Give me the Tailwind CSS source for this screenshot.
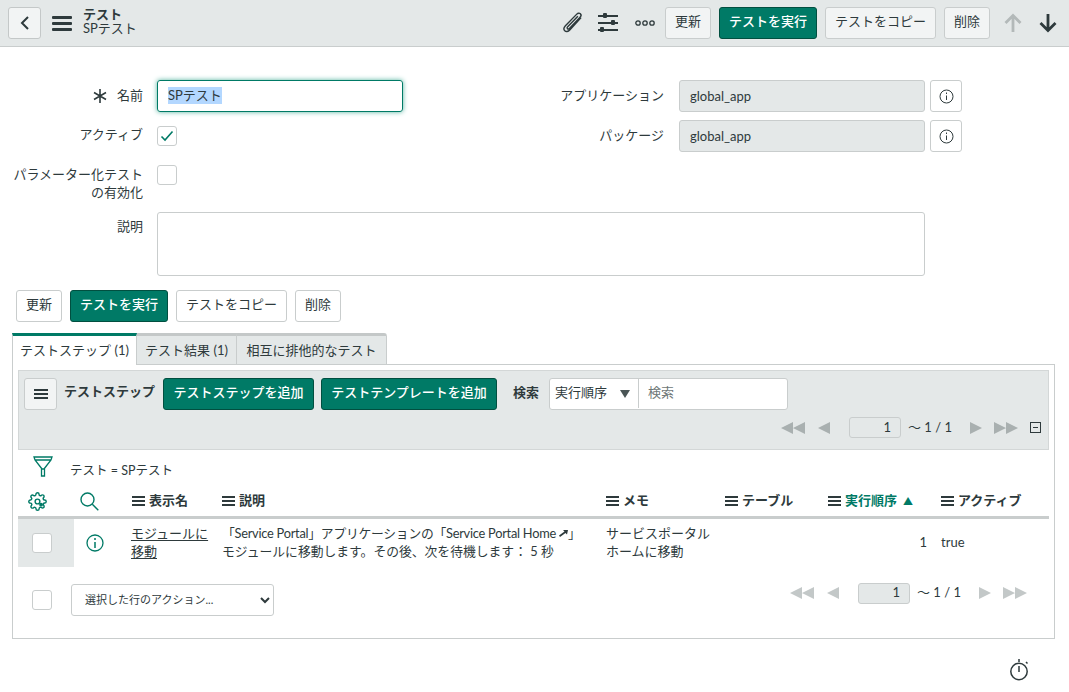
<!DOCTYPE html>
<html lang="ja">
<head>
  <meta charset="UTF-8" />
  <title>テスト</title>
  <script src="https://cdn.jsdelivr.net/npm/@tailwindcss/browser@4"></script>
</head>
<body class="bg-white text-[#2e3a3c] text-[13px] font-['Lato','Noto_Sans_CJK_JP',sans-serif] h-[692px] w-[1069px] overflow-hidden">

  <!-- header -->
  <header class="h-[47px] bg-[#e4e8e8] border-b border-[#c9cdcd] flex items-center pl-2 pr-[11px]">
    <button class="w-[33px] h-[32px] bg-[#f2f4f4] border border-[#c4c8c8] rounded-[3px] flex items-center justify-center">
      <svg width="10" height="16" viewBox="0 0 10 16" fill="none" stroke="#2e3a3c" stroke-width="2"><path d="M8 2 2 8l6 6"/></svg>
    </button>
    <svg class="ml-[11px]" width="20" height="16" viewBox="0 0 20 16" fill="#2e3a3c"><rect width="20" height="3" y="1" rx="1"/><rect width="20" height="3" y="7" rx="1"/><rect width="20" height="3" y="13" rx="1"/></svg>
    <div class="ml-[11px] leading-[14px] pb-[5px]">
      <div class="font-bold text-[13px]">テスト</div>
      <div class="text-[13px]">SPテスト</div>
    </div>
    <div class="ml-auto flex items-center">
      <svg width="26" height="26" viewBox="0 0 24 24" fill="none" stroke="#2e3a3c" stroke-width="1.3"><path d="M19.5 7 9 18.5c-1.500 1.600-3.500 1.800-4.600.7-1.100-1.100-.9-3 .6-4.600L15.500 3.800c1-1 2.400-1.200 3.300-.3.900.9.700 2.300-.3 3.300L8.700 17c-.6.600-1.300.7-1.800.2-.5-.5-.4-1.200.2-1.800L16.500 5.800"/></svg>
      <svg class="ml-[12px]" width="22" height="22" viewBox="0 0 22 22" fill="#2e3a3c"><rect y="3" width="20" height="2"/><rect x="5" y="1" width="4" height="5" rx="1"/><rect y="10" width="20" height="2"/><rect x="13" y="8" width="4" height="5" rx="1"/><rect y="17" width="20" height="2"/><rect x="2" y="15" width="4" height="5" rx="1"/></svg>
      <svg class="ml-[15px]" width="20" height="6" viewBox="0 0 20 6" fill="none" stroke="#2e3a3c" stroke-width="1.3"><circle cx="3" cy="3" r="2.200"/><circle cx="10" cy="3" r="2.200"/><circle cx="17" cy="3" r="2.200"/></svg>
      <button class="ml-[10px] h-[32px] w-[46px] pb-[2px] bg-[#f2f4f4] border border-[#c9cdcd] rounded-[3px]">更新</button>
      <button class="ml-2 h-[32px] w-[98px] pb-[2px] bg-[#007a66] border border-[#014f40] rounded-[3px] text-white font-medium">テストを実行</button>
      <button class="ml-2 h-[32px] w-[111px] pb-[2px] bg-[#f2f4f4] border border-[#c9cdcd] rounded-[3px]">テストをコピー</button>
      <button class="ml-2 h-[32px] w-[46px] pb-[2px] bg-[#f2f4f4] border border-[#c9cdcd] rounded-[3px]">削除</button>
      <svg class="ml-[13px]" width="20" height="20" viewBox="0 0 20 20" fill="none" stroke="#b3b9b9" stroke-width="2.800"><path d="M10 19V3M2.500 10 10 2.500l7.500 7.500"/></svg>
      <svg class="ml-[15px]" width="20" height="20" viewBox="0 0 20 20" fill="none" stroke="#2e3a3c" stroke-width="2.800"><path d="M10 1v16M2.500 10l7.500 7.500 7.500-7.500"/></svg>
    </div>
  </header>

  <!-- form -->
  <form class="pt-[33px] pl-[13px]">
    <div class="grid grid-cols-[130px_260px_262px_260px_auto] items-start">
      <div class="col-start-1 h-[32px] flex items-center justify-end gap-[10px]">
        <svg width="14" height="14" viewBox="0 0 14 14" stroke="#2e3a3c" stroke-width="1.600" fill="none"><path d="M7 0v14M1 3.500l12 7M13 3.500l-12 7"/></svg>
        <span>名前</span>
      </div>
      <div class="ml-[14px] h-[32px] border border-[#007a66] rounded-[3px] shadow-[0_0_5px_#53b39f] flex items-center px-[10px]">
        <span class="bg-[#b3d7ff] leading-[17px] -translate-y-px">SPテスト</span>
      </div>
      <div class="h-[32px] flex items-center justify-end pr-[1px]">アプリケーション</div>
      <div class="ml-[14px] h-[32px] bg-[#e4e8e8] border border-[#c9cdcd] rounded-[3px] flex items-center px-[10px]"><span class="translate-y-px">global_app</span></div>
      <div class="ml-[5px] w-[32px] h-[32px] border border-[#c9cdcd] rounded-[3px] flex items-center justify-center">
        <svg width="15" height="15" viewBox="0 0 15 15" fill="none" stroke="#2e3a3c"><circle cx="7.500" cy="7.500" r="6.500"/><path d="M7.500 6.500v4.500M7.500 3.500v1.500"/></svg>
      </div>

      <div class="col-start-1 mt-2 h-[32px] flex items-center justify-end -translate-y-px">アクティブ</div>
      <div class="ml-[14px] mt-2 h-[32px] flex items-center">
        <div class="w-[20px] h-[20px] border border-[#c9cdcd] rounded-[3px] flex items-center justify-center">
          <svg width="14" height="12" viewBox="0 0 14 12" fill="none" stroke="#007a66" stroke-width="1.600"><path d="M1.500 6.500 5 10l7.500-8.500"/></svg>
        </div>
      </div>
      <div class="mt-2 h-[32px] flex items-center justify-end pr-[1px]">パッケージ</div>
      <div class="ml-[14px] mt-2 h-[32px] bg-[#e4e8e8] border border-[#c9cdcd] rounded-[3px] flex items-center px-[10px]"><span class="translate-y-px">global_app</span></div>
      <div class="ml-[5px] mt-2 w-[32px] h-[32px] border border-[#c9cdcd] rounded-[3px] flex items-center justify-center">
        <svg width="15" height="15" viewBox="0 0 15 15" fill="none" stroke="#2e3a3c"><circle cx="7.500" cy="7.500" r="6.500"/><path d="M7.500 6.500v4.500M7.500 3.500v1.500"/></svg>
      </div>

      <div class="col-start-1 mt-[13px] text-right leading-[18px]">パラメーター化テスト<br>の有効化</div>
      <div class="ml-[14px] mt-[13px] w-[20px] h-[20px] border border-[#c9cdcd] rounded-[3px]"></div>
    </div>

    <div class="flex items-start mt-[11px]">
      <div class="w-[130px] text-right pt-[5px]">説明</div>
      <div class="ml-[14px] w-[768px] h-[64px] border border-[#c9cdcd] rounded-[3px]"></div>
    </div>

    <div class="flex gap-2 mt-[14px] ml-[3px]">
      <button class="h-[32px] w-[46px] pb-[2px] border border-[#c9cdcd] rounded-[3px]">更新</button>
      <button class="h-[32px] w-[98px] pb-[2px] bg-[#007a66] border border-[#014f40] rounded-[3px] text-white font-medium">テストを実行</button>
      <button class="h-[32px] w-[111px] pb-[2px] border border-[#c9cdcd] rounded-[3px]">テストをコピー</button>
      <button class="h-[32px] w-[46px] pb-[2px] border border-[#c9cdcd] rounded-[3px]">削除</button>
    </div>
  </form>

  <!-- tabs -->
  <div class="ml-[12px] mt-[11px] flex h-[32px] w-[375px] relative z-10">
    <div class="w-[125px] pt-[1px] bg-white border-l border-r border-[#c9cdcd] border-t-[3px] border-t-[#007a66] flex items-center justify-center h-[32px]">テストステップ (1)</div>
    <div class="w-[100px] pt-[1px] bg-[#e4e8e8] border-r border-[#c9cdcd] border-t-[3px] border-t-[#c4c8c8] border-b flex items-center justify-center h-[32px]">テスト結果 (1)</div>
    <div class="w-[150px] pt-[1px] bg-[#e4e8e8] border-r border-[#c9cdcd] border-t-[3px] border-t-[#c4c8c8] border-b rounded-tr-[3px] flex items-center justify-center h-[32px]">相互に排他的なテスト</div>
  </div>

  <section class="ml-[12px] -mt-px w-[1043px] h-[275px] border border-[#c9cdcd] px-[5px] pt-[5px]">
    <!-- list toolbar -->
    <div class="h-[80px] bg-[#e4e8e8] border border-[#d3d7d7] pl-[5px] pr-[7px] pt-[7px]">
      <div class="flex items-center h-[32px]">
        <button class="w-[33px] h-[32px] bg-[#f2f4f4] border border-[#c9cdcd] rounded-[3px] flex items-center justify-center">
          <svg width="14" height="12" viewBox="0 0 14 12" fill="#2e3a3c"><rect width="14" height="2" y="1"/><rect width="14" height="2" y="5"/><rect width="14" height="2" y="9"/></svg>
        </button>
        <span class="ml-[7px] font-bold -translate-y-[2px]">テストステップ</span>
        <button class="ml-[8px] w-[151px] h-[32px] pb-[2px] bg-[#007a66] border border-[#014f40] rounded-[3px] text-white font-medium">テストステップを追加</button>
        <button class="ml-[7px] w-[176px] h-[32px] pb-[2px] bg-[#007a66] border border-[#014f40] rounded-[3px] text-white font-medium">テストテンプレートを追加</button>
        <span class="ml-[16px] font-bold -translate-y-px">検索</span>
        <div class="ml-[10px] flex h-[32px] w-[239px] bg-white border border-[#c9cdcd] rounded-[3px]">
          <div class="w-[89px] border-r border-[#c9cdcd] flex items-center justify-between pl-[5px] pr-[8px] -translate-y-px">実行順序<svg width="10" height="9" viewBox="0 0 10 9" fill="#4a5556"><path d="M0 1h10L5 9z"/></svg></div>
          <div class="pl-[9px] flex items-center text-[#6e7777] -translate-y-px">検索</div>
        </div>
      </div>
      <div class="flex items-center justify-end -mt-[1px] h-[37px]">
        <svg width="25" height="12" viewBox="0 0 25 12" fill="#a9b0b0"><path d="M12 0v12L0 6zM24 0v12L12 6z"/></svg>
        <svg class="ml-[12px]" width="12" height="12" viewBox="0 0 12 12" fill="#a9b0b0"><path d="M12 0v12L0 6z"/></svg>
        <div class="ml-[19px] w-[52px] h-[21px] border border-[#c9cdcd] rounded-[3px] flex items-center justify-end pr-[9px]">1</div>
        <span class="ml-[7px] w-[44px]">～ 1 / 1</span>
        <svg class="ml-[18px]" width="12" height="12" viewBox="0 0 12 12" fill="#a9b0b0"><path d="M0 0v12l12-6z"/></svg>
        <svg class="ml-[12px]" width="25" height="12" viewBox="0 0 25 12" fill="#a9b0b0"><path d="M0 0v12l12-6zM12 0v12l12-6z"/></svg>
        <div class="ml-[11px] w-[11px] h-[11px] border border-[#2e3a3c] flex items-center justify-center"><div class="w-[5px] h-px bg-[#2e3a3c]"></div></div>
      </div>
    </div>

    <!-- filter breadcrumb -->
    <div class="flex items-center h-[30px] mt-[5px]">
      <svg class="ml-[15px] -translate-y-[3px]" width="20" height="22" viewBox="0 0 20 22" fill="none" stroke="#007a66" stroke-width="1.300"><path d="M1 1h18l-1 3-7 9H9L2 4zM2 4h16M8.500 13v7h3v-7"/></svg>
      <span class="ml-[17px] text-[12.500px] translate-y-px">テスト = SPテスト</span>
    </div>

    <!-- table header -->
    <div class="grid grid-cols-[56px_57px_91px_384px_119px_103px_113px_108px] h-[33px] items-center border-b-[3px] border-[#c9cdcd] font-bold mt-[1px] w-[1031px]">
      <div class="pl-[10px]">
        <svg width="19" height="19" viewBox="0 0 24 24" fill="none" stroke="#007a66" stroke-width="1.800"><circle cx="12" cy="12" r="3"/><circle cx="16.500" cy="16" r="1.500" fill="#007a66"/><path d="M19.400 15a1.650 1.650 0 0 0 .33 1.820l.06.06a2 2 0 0 1 0 2.830 2 2 0 0 1-2.830 0l-.06-.06a1.650 1.650 0 0 0-1.820-.33 1.650 1.650 0 0 0-1 1.510V21a2 2 0 0 1-2 2 2 2 0 0 1-2-2v-.09A1.650 1.650 0 0 0 9 19.400a1.650 1.650 0 0 0-1.820.33l-.06.06a2 2 0 0 1-2.830 0 2 2 0 0 1 0-2.830l.06-.06a1.650 1.650 0 0 0 .33-1.820 1.650 1.650 0 0 0-1.510-1H3a2 2 0 0 1-2-2 2 2 0 0 1 2-2h.09A1.650 1.650 0 0 0 4.600 9a1.650 1.650 0 0 0-.33-1.820l-.06-.06a2 2 0 0 1 0-2.830 2 2 0 0 1 2.830 0l.06.06a1.650 1.650 0 0 0 1.820.33H9a1.650 1.650 0 0 0 1-1.510V3a2 2 0 0 1 2-2 2 2 0 0 1 2 2v.09a1.650 1.650 0 0 0 1 1.510 1.650 1.650 0 0 0 1.820-.33l.06-.06a2 2 0 0 1 2.830 0 2 2 0 0 1 0 2.830l-.06.06a1.650 1.650 0 0 0-.33 1.820V9a1.650 1.650 0 0 0 1.510 1H21a2 2 0 0 1 2 2 2 2 0 0 1-2 2h-.09a1.650 1.650 0 0 0-1.510 1z"/></svg>
      </div>
      <div class="pl-[6px]">
        <svg width="19" height="19" viewBox="0 0 19 19" fill="none" stroke="#007a66" stroke-width="1.400"><circle cx="7.500" cy="7.500" r="6.500"/><path d="m12.300 12.300 6 6"/></svg>
      </div>
      <div class="flex items-center gap-[4px] pl-px"><svg width="13" height="10" viewBox="0 0 13 10" fill="#2e3a3c"><rect width="13" height="2"/><rect width="13" height="2" y="4"/><rect width="13" height="2" y="8"/></svg>表示名</div>
      <div class="flex items-center gap-[4px]"><svg width="13" height="10" viewBox="0 0 13 10" fill="#2e3a3c"><rect width="13" height="2"/><rect width="13" height="2" y="4"/><rect width="13" height="2" y="8"/></svg>説明</div>
      <div class="flex items-center gap-[4px]"><svg width="13" height="10" viewBox="0 0 13 10" fill="#2e3a3c"><rect width="13" height="2"/><rect width="13" height="2" y="4"/><rect width="13" height="2" y="8"/></svg>メモ</div>
      <div class="flex items-center gap-[4px]"><svg width="13" height="10" viewBox="0 0 13 10" fill="#2e3a3c"><rect width="13" height="2"/><rect width="13" height="2" y="4"/><rect width="13" height="2" y="8"/></svg>テーブル</div>
      <div class="flex items-center gap-[4px] text-[#007a66]"><svg width="13" height="10" viewBox="0 0 13 10" fill="#2e3a3c"><rect width="13" height="2"/><rect width="13" height="2" y="4"/><rect width="13" height="2" y="8"/></svg>実行順序<span class="ml-[2px] text-[10px]">▲</span></div>
      <div class="flex items-center gap-[4px]"><svg width="13" height="10" viewBox="0 0 13 10" fill="#2e3a3c"><rect width="13" height="2"/><rect width="13" height="2" y="4"/><rect width="13" height="2" y="8"/></svg>アクティブ</div>
    </div>

    <!-- table row -->
    <div class="grid grid-cols-[56px_57px_91px_384px_119px_103px_113px_108px] h-[48px] w-[1031px] items-center leading-[18px]">
      <div class="h-full bg-[#e4e8e8] flex items-center pl-[14px]"><div class="w-[20px] h-[20px] bg-white border border-[#c9cdcd] rounded-[3px]"></div></div>
      <div class="pl-[12px]">
        <svg width="18" height="18" viewBox="0 0 18 18" fill="none" stroke="#007a66" stroke-width="1.300"><circle cx="9" cy="9" r="8"/><path d="M9 8v6M9 4v2" stroke-width="1.500"/></svg>
      </div>
      <div class="underline underline-offset-2 -translate-y-px">モジュールに<br>移動</div>
      <div class="whitespace-nowrap -translate-y-px text-[12.800px]"><span class="tracking-[-0.25px]">「Service Portal」アプリケーションの「Service Portal Home <svg class="inline -mt-[2px]" width="9" height="7" viewBox="0 0 9 7" fill="#2e3a3c"><path d="M9 0H4l1.500 1.500L0 5.500 1 7l5.500-4L8 4.500z"/></svg>」</span><br>モジュールに移動します。その後、次を待機します： 5 秒</div>
      <div class="-translate-y-px">サービスポータル<br>ホームに移動</div>
      <div></div>
      <div class="text-right pr-[14px] -translate-y-px">1</div>
      <div class="-translate-y-px">true</div>
    </div>

    <!-- list footer -->
    <div class="flex items-center h-[32px] mt-[17px] w-[1031px]">
      <div class="ml-[14px] w-[20px] h-[20px] border border-[#c9cdcd] rounded-[3px]"></div>
      <div class="ml-[19px] relative w-[203px] h-[32px]">
        <select class="appearance-none w-full h-full border border-[#c9cdcd] rounded-[3px] bg-white pl-[13px] text-[11px] text-[#2e3a3c]"><option>選択した行のアクション...</option></select>
        <svg class="absolute right-[4px] top-[13px] pointer-events-none" width="10" height="7" viewBox="0 0 10 7" fill="none" stroke="#2e3a3c" stroke-width="2"><path d="m1 1 4 4 4-4"/></svg>
      </div>
      <div class="ml-auto flex items-center pr-[21px] -translate-y-[7px]">
        <svg width="25" height="12" viewBox="0 0 25 12" fill="#c3c8c8"><path d="M12 0v12L0 6zM24 0v12L12 6z"/></svg>
        <svg class="ml-[12px]" width="12" height="12" viewBox="0 0 12 12" fill="#c3c8c8"><path d="M12 0v12L0 6z"/></svg>
        <div class="ml-[19px] w-[52px] h-[21px] bg-[#e4e8e8] border border-[#c9cdcd] rounded-[3px] flex items-center justify-end pr-[9px]">1</div>
        <span class="ml-[7px] w-[44px]">～ 1 / 1</span>
        <svg class="ml-[18px]" width="12" height="12" viewBox="0 0 12 12" fill="#c3c8c8"><path d="M0 0v12l12-6z"/></svg>
        <svg class="ml-[12px]" width="25" height="12" viewBox="0 0 25 12" fill="#c3c8c8"><path d="M0 0v12l12-6zM12 0v12l12-6z"/></svg>
      </div>
    </div>
  </section>

  <div class="flex justify-end pr-[40px] mt-[20px]">
    <svg width="20" height="22" viewBox="0 0 20 22" fill="none" stroke="#2e3a3c" stroke-width="1.500"><circle cx="10" cy="12.500" r="8.200"/><path d="M10 0v3M10 7v6M17 3l1.500 1.500"/></svg>
  </div>

</body>
</html>
